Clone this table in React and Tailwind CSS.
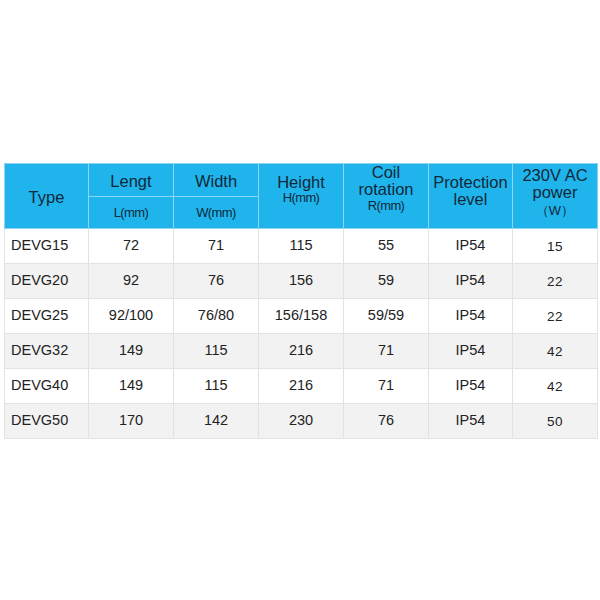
const rows = [
  ['DEVG15', '72', '71', '115', '55', 'IP54', '15'],
  ['DEVG20', '92', '76', '156', '59', 'IP54', '22'],
  ['DEVG25', '92/100', '76/80', '156/158', '59/59', 'IP54', '22'],
  ['DEVG32', '149', '115', '216', '71', 'IP54', '42'],
  ['DEVG40', '149', '115', '216', '71', 'IP54', '42'],
  ['DEVG50', '170', '142', '230', '76', 'IP54', '50'],
]

export default function App() {
  return (
    <div className="w-[600px] h-[600px] bg-white pt-[163px] pl-[4px]" style={{ fontFamily: '"Liberation Sans", Arial, sans-serif' }}>
      <table className="table-fixed border-collapse w-[593px]">
        <colgroup>
          <col className="w-[84px]" />
          <col className="w-[85px]" />
          <col className="w-[85px]" />
          <col className="w-[85px]" />
          <col className="w-[85px]" />
          <col className="w-[84px]" />
          <col className="w-[85px]" />
        </colgroup>
        <thead className="bg-[#1fb5ec] text-[#10283a]">
          <tr className="h-[33px]">
            <th rowSpan={2} className="border border-[#8dd6f3] font-normal text-[16.5px] pt-[2px]">Type</th>
            <th className="border border-[#8dd6f3] font-normal text-[16.5px] pt-[2px]">Lengt</th>
            <th className="border border-[#8dd6f3] font-normal text-[16.5px] pt-[2px]">Width</th>
            <th rowSpan={2} className="border border-[#8dd6f3] font-normal align-top pt-[9px]">
              <div className="text-[16.5px] leading-[18px]">Height</div>
              <div className="text-[13px] leading-[14px] tracking-[-0.6px]">H(mm)</div>
            </th>
            <th rowSpan={2} className="border border-[#8dd6f3] font-normal align-top pt-0">
              <div className="text-[16.5px] leading-[17px]">Coil</div>
              <div className="text-[16.5px] leading-[17px]">rotation</div>
              <div className="text-[13px] leading-[16px] tracking-[-0.6px]">R(mm)</div>
            </th>
            <th rowSpan={2} className="border border-[#8dd6f3] font-normal align-top pt-[10px]">
              <div className="text-[16.5px] leading-[17px]">Protection</div>
              <div className="text-[16.5px] leading-[17px]">level</div>
            </th>
            <th rowSpan={2} className="border border-[#8dd6f3] font-normal align-top pt-[3px]">
              <div className="text-[16.5px] leading-[17px]">230V AC</div>
              <div className="text-[16.5px] leading-[17px]">power</div>
              <div className="text-[13px] leading-[20px]">（W）</div>
            </th>
          </tr>
          <tr className="h-[32px]">
            <th className="border border-[#8dd6f3] font-normal text-[13px] tracking-[-0.6px]">L(mm)</th>
            <th className="border border-[#8dd6f3] font-normal text-[13px] tracking-[-0.6px]">W(mm)</th>
          </tr>
        </thead>
        <tbody className="text-[#222222] text-[14.5px]">
          {rows.map((r, i) => (
            <tr key={r[0]} className={i % 2 === 1 ? 'h-[35px] bg-[#f2f2f2]' : 'h-[35px] bg-white'}>
              {r.map((c, j) => (
                <td
                  key={j}
                  className={
                    j === 0
                      ? 'border border-[#e2e2e2] text-left pl-[6px]'
                      : j === 6
                      ? 'border border-[#e2e2e2] text-center text-[13.5px] tracking-[0.5px] pt-[2px]'
                      : 'border border-[#e2e2e2] text-center'
                  }
                >
                  {c}
                </td>
              ))}
            </tr>
          ))}
        </tbody>
      </table>
    </div>
  )
}
